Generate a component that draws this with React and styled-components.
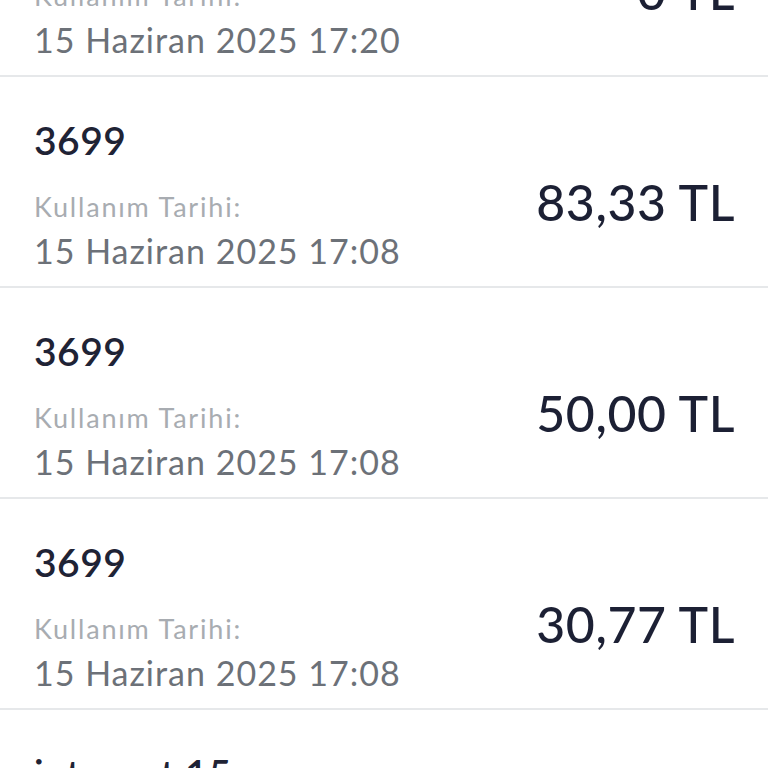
import React from 'react'
import styled, {createGlobalStyle} from 'styled-components'

const GlobalStyle = createGlobalStyle`
    html, body {
        margin: 0;
        padding: 0;
        background: #fff;
    }
    body {
        font-family: "Lato", "Open Sans", sans-serif;
    }
`

const Viewport = styled.div`
    height: 768px;
    overflow: hidden;
    background: #fff;
`

// list is scrolled, first item is partly above the top edge
const List = styled.div`
    margin-top: -134px;
`

const Item = styled.div`
    height: 209px;
    box-sizing: content-box;
    display: flex;
    align-items: flex-start;
    justify-content: space-between;
    padding: 0 33px 0 34px;
    border-bottom: 2px solid #e6e8ea;
`

const Info = styled.div`
    display: flex;
    flex-direction: column;
    padding-top: 39px;
`

const Title = styled.div`
    font-size: 39px;
    line-height: 48px;
    font-weight: 600;
    color: #1f2335;
    letter-spacing: 0.5px;
    margin-bottom: 22px;
`

const Label = styled.div`
    font-size: 27px;
    line-height: 42px;
    color: #a8acb1;
    letter-spacing: 1.8px;
`

const DateText = styled.div`
    font-size: 34px;
    line-height: 46px;
    color: #6c7178;
    letter-spacing: 1px;
`

const Amount = styled.div`
    font-size: 50px;
    font-weight: 500;
    color: #1c2034;
    letter-spacing: 0.6px;
    padding-top: 95px;
`

const items = [
    {title: 'internet 15', date: '15 Haziran 2025 17:20', amount: '0 TL'},
    {title: '3699', date: '15 Haziran 2025 17:08', amount: '83,33 TL'},
    {title: '3699', date: '15 Haziran 2025 17:08', amount: '50,00 TL'},
    {title: '3699', date: '15 Haziran 2025 17:08', amount: '30,77 TL'},
    {title: 'internet 15', date: '15 Haziran 2025 17:00', amount: '0 TL'},
]

export default function App() {
    return <Viewport>
        <GlobalStyle/>
        <List>
            {items.map((item, i) => (
                <Item key={i}>
                    <Info>
                        <Title>{item.title}</Title>
                        <Label>Kullanım Tarihi:</Label>
                        <DateText>{item.date}</DateText>
                    </Info>
                    <Amount>{item.amount}</Amount>
                </Item>
            ))}
        </List>
    </Viewport>
}
